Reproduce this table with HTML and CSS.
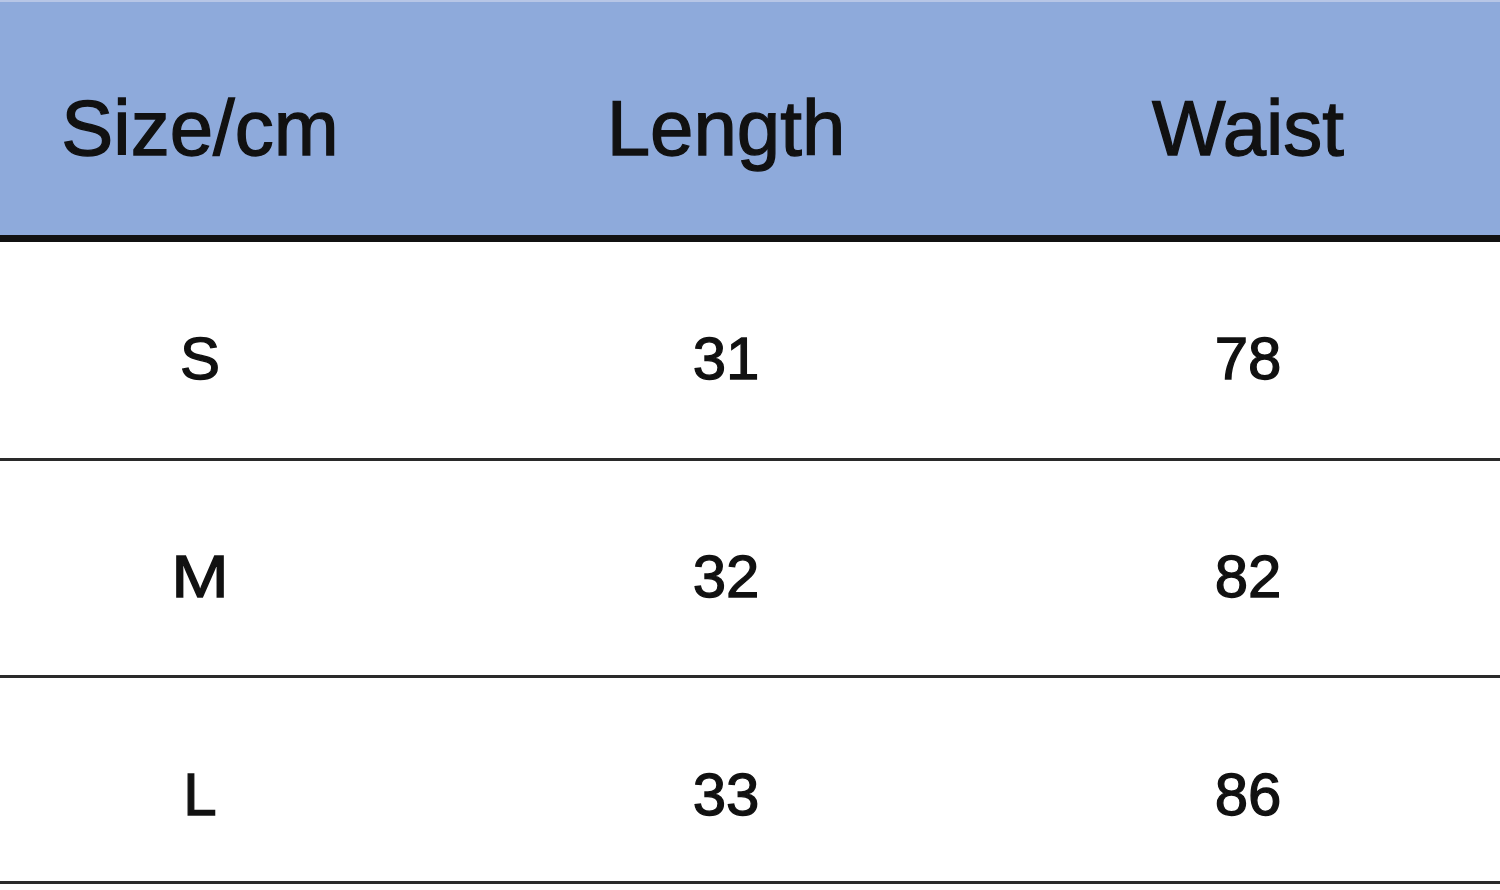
FILE: index.html
```html
<!DOCTYPE html>
<html>
<head>
<meta charset="utf-8">
<link rel="stylesheet" href="styles.css">
</head>
<body>
<div class="table">
  <div class="row head">
    <div class="cell">Size/cm</div>
    <div class="cell">Length</div>
    <div class="cell">Waist</div>
  </div>
  <div class="row r1">
    <div class="cell">S</div>
    <div class="cell">31</div>
    <div class="cell">78</div>
  </div>
  <div class="row r2">
    <div class="cell">M</div>
    <div class="cell">32</div>
    <div class="cell">82</div>
  </div>
  <div class="row r3">
    <div class="cell">L</div>
    <div class="cell">33</div>
    <div class="cell">86</div>
  </div>
</div>
</body>
</html>
```
FILE: styles.css
```css
html, body {
  margin: 0;
  padding: 0;
  background: #ffffff;
}
body {
  width: 1500px;
  height: 890px;
  overflow: hidden;
  font-family: "Liberation Sans", Arial, sans-serif;
  color: #111111;
}
.table {
  display: flex;
  flex-direction: column;
}
.row {
  display: grid;
  grid-template-columns: 400px 652px 392px 1fr;
  box-sizing: border-box;
}
.cell {
  display: flex;
  align-items: center;
  justify-content: center;
  line-height: 1;
  box-sizing: border-box;
  -webkit-text-stroke: 1.3px #111111;
}
.head {
  height: 242px;
  background: #8eaadb;
  border-top: 2px solid #b7c6e6;
  border-bottom: 7px solid #111111;
  font-size: 78px;
}
.head .cell { padding-top: 19px; }
.r1, .r2, .r3 {
  font-size: 60px;
  border-bottom: 3px solid #2a2a2a;
}
.r1 { height: 219px; }
.r1 .cell { padding-top: 17px; }
.r2 { height: 217px; }
.r2 .cell { padding-top: 18px; }
.r2 .cell:first-child { letter-spacing: 0; transform: scaleX(1.15); }
.r3 { height: 206px; }
.r3 .cell { padding-top: 31px; }
```
